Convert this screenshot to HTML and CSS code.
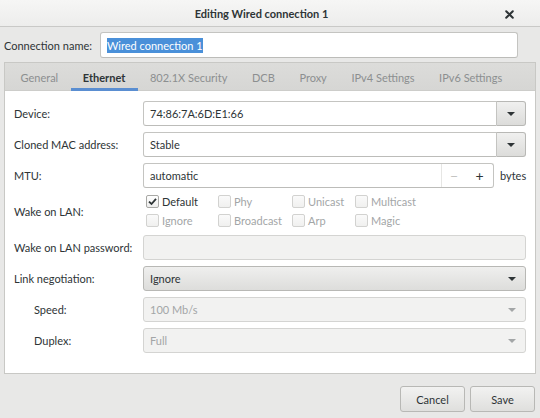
FILE: index.html
```html
<!DOCTYPE html>
<html>
<head>
<meta charset="utf-8">
<link rel="stylesheet" href="styles.css">
</head>
<body>
<div class="window">
  <div class="titlebar">
    <span class="title">Editing Wired connection 1</span>
    <span class="close">
      <svg width="9" height="9" viewBox="0 0 9 9"><path d="M1.2 1.2 L7.8 7.8 M7.8 1.2 L1.2 7.8" stroke="#2e3436" stroke-width="2" stroke-linecap="round"/></svg>
    </span>
  </div>
  <div class="namerow">
    <span class="label">Connection name:</span>
    <div class="entry name-entry"><span class="sel">Wired connection 1</span></div>
  </div>
  <div class="notebook">
    <div class="tabs">
      <span class="tab">General</span>
      <span class="tab active">Ethernet</span>
      <span class="tab">802.1X Security</span>
      <span class="tab">DCB</span>
      <span class="tab">Proxy</span>
      <span class="tab">IPv4 Settings</span>
      <span class="tab">IPv6 Settings</span>
    </div>
    <div class="page">
      <div class="form">
        <span class="label">Device:</span>
        <div class="combo">
          <div class="entry combo-entry">74:86:7A:6D:E1:66</div>
          <div class="drop"><span class="arrow"></span></div>
        </div>

        <span class="label">Cloned MAC address:</span>
        <div class="combo">
          <div class="entry combo-entry">Stable</div>
          <div class="drop"><span class="arrow"></span></div>
        </div>

        <span class="label">MTU:</span>
        <div class="mtu">
          <div class="entry spin">
            <span class="spin-text">automatic</span>
            <span class="spin-btn minus">−</span>
            <span class="spin-btn plus">+</span>
          </div>
          <span class="unit">bytes</span>
        </div>

        <span class="label wol-label">Wake on LAN:</span>
        <div class="checks">
          <label class="chk"><span class="box checked"><svg width="11" height="11" viewBox="0 0 11 11"><path d="M2 5.6 L4.5 8 L9 2.8" stroke="#2e3436" stroke-width="1.8" fill="none"/></svg></span><span class="ct strong">Default</span></label>
          <label class="chk"><span class="box"></span><span class="ct">Phy</span></label>
          <label class="chk"><span class="box"></span><span class="ct">Unicast</span></label>
          <label class="chk"><span class="box"></span><span class="ct">Multicast</span></label>
          <label class="chk"><span class="box"></span><span class="ct">Ignore</span></label>
          <label class="chk"><span class="box"></span><span class="ct">Broadcast</span></label>
          <label class="chk"><span class="box"></span><span class="ct">Arp</span></label>
          <label class="chk"><span class="box"></span><span class="ct">Magic</span></label>
        </div>

        <span class="label">Wake on LAN password:</span>
        <div class="entry disabled"></div>

        <span class="label">Link negotiation:</span>
        <div class="button-combo">
          <span>Ignore</span>
          <span class="arrow"></span>
        </div>

        <span class="label indent">Speed:</span>
        <div class="button-combo disabled">
          <span>100 Mb/s</span>
          <span class="arrow"></span>
        </div>

        <span class="label indent">Duplex:</span>
        <div class="button-combo disabled">
          <span>Full</span>
          <span class="arrow"></span>
        </div>
      </div>
    </div>
  </div>
  <div class="actions">
    <button class="btn">Cancel</button>
    <button class="btn">Save</button>
  </div>
</div>
</body>
</html>
```

FILE: styles.css
```css
html, body {
  margin: 0;
  padding: 0;
}
body {
  width: 540px;
  height: 418px;
  overflow: hidden;
  background: #e8e8e7;
  font-family: "Lato", "Open Sans", sans-serif;
  font-size: 11px;
  color: #2e3436;
}
.window {
  display: flex;
  flex-direction: column;
  height: 418px;
}
.titlebar {
  height: 27px;
  flex: none;
  background: linear-gradient(#f6f6f5, #ededec);
  border-bottom: 1px solid #c9c9c7;
  display: flex;
  align-items: center;
  justify-content: center;
  padding-right: 17px;
  position: relative;
  box-sizing: border-box;
}
.title {
  font-weight: bold;
  font-size: 11px;
  color: #2e3436;
}
.close {
  position: absolute;
  right: 26px;
  top: 10px;
  width: 9px;
  height: 9px;
  display: flex;
}
.namerow {
  display: flex;
  align-items: center;
  padding: 5px 22px 4px 4px;
  gap: 8px;
}
.label {
  color: #2e3436;
  white-space: nowrap;
}
.entry {
  height: 25px;
  box-sizing: border-box;
  border: 1px solid #c4c4c1;
  border-bottom-color: #bcbcb9;
  border-radius: 3px;
  background: #fff;
  display: flex;
  align-items: center;
  padding: 0 6px;
  color: #2e3436;
}
.name-entry {
  flex: 1;
  height: 26px;
  padding-left: 6px;
}
.sel {
  background: #4a90d9;
  color: #fff;
  padding: 1px 0;
}
.notebook {
  margin: 0 4px;
  border: 1px solid #c8c8c5;
  background: #fff;
  display: flex;
  flex-direction: column;
}
.tabs {
  height: 28px;
  box-sizing: border-box;
  background: linear-gradient(#dcdcda, #d6d6d4);
  display: flex;
  align-items: stretch;
  padding-left: 4px;
  border-bottom: 1px solid #cdcdca;
}
.tab {
  padding: 3px 12.3px 0;
  display: flex;
  align-items: center;
  white-space: nowrap;
  color: #8c8f90;
  border-bottom: 3px solid transparent;
  margin-bottom: -1px;
}
.tab:first-child {
  padding-left: 11.5px;
}
.tab.active {
  color: #2e3436;
  font-weight: bold;
  border-bottom-color: #5a8ed1;
}
.page {
  padding: 10px 9px 20px 9px;
}
.form {
  display: grid;
  grid-template-columns: 129px 1fr;
  row-gap: 6px;
  align-items: center;
}
.combo {
  display: flex;
  height: 25px;
}
.combo-entry {
  flex: 1;
  border-radius: 3px 0 0 3px;
}
.drop {
  width: 29px;
  height: 25px;
  box-sizing: border-box;
  border: 1px solid #b8b8b5;
  border-left: none;
  border-radius: 0 3px 3px 0;
  background: linear-gradient(#f0f0ef, #dcdcda);
  display: flex;
  align-items: center;
  justify-content: center;
}
.arrow {
  width: 0;
  height: 0;
  border-left: 4px solid transparent;
  border-right: 4px solid transparent;
  border-top: 4px solid #2e3436;
}
.mtu {
  display: flex;
  align-items: center;
  gap: 6px;
}
.spin {
  flex: 1;
  padding: 0 0 0 6px;
}
.spin-text {
  flex: 1;
}
.spin-btn {
  height: 23px;
  display: flex;
  align-items: center;
  justify-content: center;
  font-size: 14px;
}
.minus {
  color: #c4c4c2;
  border-left: 1px solid #e6e6e4;
  width: 24px;
}
.plus {
  color: #2e3436;
  width: 27px;
}
.unit {
  width: 26px;
}
.checks {
  display: grid;
  grid-template-columns: 72px 74px 63px 80px;
  row-gap: 5px;
  padding: 0 0 2px 3px;
}
.chk {
  display: flex;
  align-items: center;
  gap: 3px;
  height: 14px;
  color: #a3a6a7;
}
.box {
  width: 13px;
  height: 13px;
  box-sizing: border-box;
  border: 1px solid #d2d2d0;
  border-radius: 2px;
  background: linear-gradient(#fafafa, #f0f0ef);
  display: flex;
  align-items: center;
  justify-content: center;
  flex: none;
}
.box.checked {
  border-color: #a8a8a5;
  background: linear-gradient(#ffffff, #ededec);
}
.ct.strong {
  color: #2e3436;
}
.disabled {
  background: #f2f2f1;
  border-color: #d4d4d2;
}
.button-combo {
  height: 25px;
  box-sizing: border-box;
  border: 1px solid #b8b8b5;
  border-radius: 3px;
  background: linear-gradient(#efefee, #dddddb);
  display: flex;
  align-items: center;
  justify-content: space-between;
  padding: 0 9px 0 6px;
  color: #2e3436;
}
.button-combo.disabled {
  background: #f2f2f1;
  border-color: #d4d4d2;
  color: #a3a6a7;
}
.button-combo.disabled .arrow {
  border-top-color: #a3a6a7;
}
.indent {
  padding-left: 20px;
}
.actions {
  display: flex;
  justify-content: flex-end;
  gap: 5px;
  padding: 12px 5px 0 0;
}
.btn {
  width: 65px;
  height: 26px;
  border: 1px solid #b8b8b5;
  border-radius: 3px;
  background: linear-gradient(#f2f2f1, #dfdfdd);
  font-family: inherit;
  font-size: 11px;
  color: #2e3436;
  padding: 0;
}
```
